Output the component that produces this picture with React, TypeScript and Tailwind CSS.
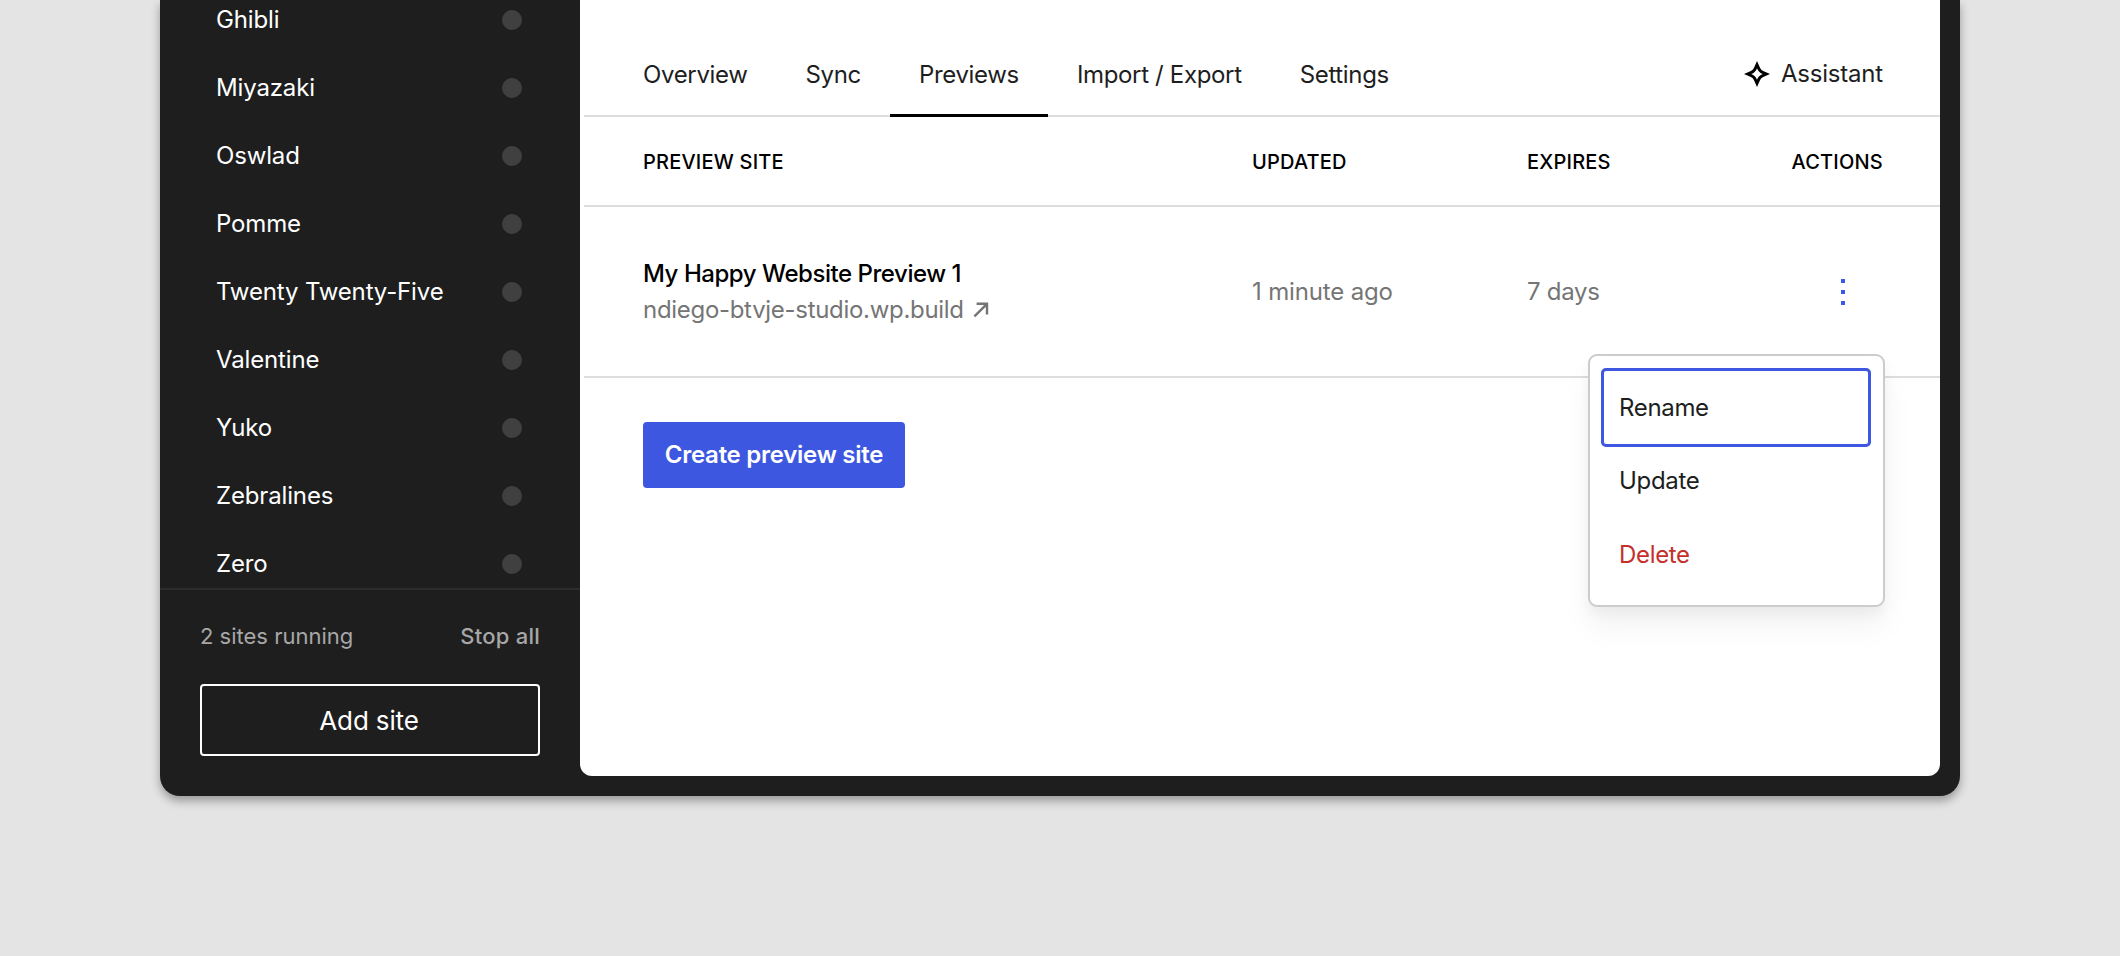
import React from 'react'

const sites = [
  'Ghibli',
  'Miyazaki',
  'Oswlad',
  'Pomme',
  'Twenty Twenty-Five',
  'Valentine',
  'Yuko',
  'Zebralines',
  'Zero'
]

const tabs = ['Overview', 'Sync', 'Previews', 'Import / Export', 'Settings']

function Sidebar() {
  return (
    <aside className="w-[420px] shrink-0 flex flex-col text-white">
      <ul className="h-[588px] -mt-[14px] mb-[14px] flex flex-col">
        {sites.map((site) => (
          <li key={site} className="h-[68px] shrink-0 pl-14 pr-[58px] flex items-center justify-between">
            <span className="text-[24px] tracking-[-0.15px]">{site}</span>
            <span className="size-5 rounded-full bg-[#404040]" />
          </li>
        ))}
      </ul>
      <div className="border-t-2 border-[#2d2d2d] px-10">
        <div className="mt-[30px] h-8 flex items-center justify-between text-[22px] text-[#a7a7a7]">
          <span>2 sites running</span>
          <button className="font-medium tracking-[0.25px]">Stop all</button>
        </div>
        <button className="mt-8 h-[72px] w-full pr-[2px] border-2 border-white rounded-[4px] text-[26px] tracking-[-0.15px] flex items-center justify-center">
          Add site
        </button>
      </div>
    </aside>
  )
}

function SparkleIcon() {
  return (
    <svg className="size-[26px]" viewBox="0 0 26 26" fill="#000" fillRule="evenodd">
      <path d="M13 0L16 6.8Q16.9 9.1 19.2 10L26 13L19.2 16Q16.9 16.9 16 19.2L13 26L10 19.2Q9.1 16.9 6.8 16L0 13L6.8 10Q9.1 9.1 10 6.8ZM13 7.2Q11.5 11.5 7.2 13Q11.5 14.5 13 18.8Q14.5 14.5 18.8 13Q14.5 11.5 13 7.2Z" />
    </svg>
  )
}

function ArrowIcon() {
  return (
    <svg className="size-4" viewBox="0 0 16 16" fill="none" stroke="currentColor" strokeWidth="2.4">
      <path d="M3.6 1.8H14V12.4M14 1.8L1.4 14.4" />
    </svg>
  )
}

function ActionsMenu() {
  return (
    <div className="absolute left-[1008px] top-[354px] w-[297px] h-[253px] pl-[11px] pr-3 py-3 bg-white border-2 border-[#cccccc] rounded-[9px] shadow-[0_20px_30px_rgba(0,0,0,0.05),0_8px_12px_rgba(0,0,0,0.04)] text-[24px] tracking-[-0.33px] text-[#1e1e1e]">
      <div className="h-[79px] px-[15px] flex items-center border-[3px] border-[#3d57e0] rounded-[5px]">Rename</div>
      <div className="h-[68px] px-[18px] flex items-center">Update</div>
      <div className="h-[79px] px-[18px] flex items-center text-[#c4302b]">Delete</div>
    </div>
  )
}

export default function App() {
  return (
    <div className="h-[956px] w-full overflow-hidden bg-[#e4e4e4] px-40 font-['Inter',sans-serif]">
      <div className="h-[796px] flex bg-[#1e1e1e] rounded-b-[20px] shadow-[0_5px_10px_rgba(0,0,0,0.33)]">
        <Sidebar />
        <main className="relative w-[1360px] h-[776px] pl-1 bg-white rounded-b-[12px]">
          <nav className="h-[117px] pl-[30px] pr-[57px] border-b-2 border-[#dddddd] flex items-end justify-between text-[24px] tracking-[-0.28px] text-[#1e1e1e]">
            <div className="flex tracking-[-0.34px]">
              {tabs.map((tab) => (
                <button
                  key={tab}
                  className={
                    tab === 'Previews'
                      ? 'h-[84px] px-[29px] pt-[2px] -mb-[2px] border-b-[3px] border-black'
                      : 'h-[84px] px-[29px] pt-[2px] -mb-[2px] border-b-[3px] border-transparent'
                  }
                >
                  {tab}
                </button>
              ))}
            </div>
            <button className="h-[82px] flex items-center gap-[11px] tracking-[-0.2px]">
              <SparkleIcon />
              Assistant
            </button>
          </nav>

          <div className="h-[90px] pt-px pl-[59px] pr-[57px] border-b-2 border-[#dddddd] flex items-center text-[20px] tracking-[0.2px] font-medium text-black">
            <span className="w-[609px]">PREVIEW SITE</span>
            <span className="w-[275px]">UPDATED</span>
            <span className="flex-1">EXPIRES</span>
            <span>ACTIONS</span>
          </div>

          <div className="h-[171px] pl-[59px] pr-[95px] border-b-2 border-[#dddddd] flex items-center text-[24px] tracking-[-0.3px] text-[#757575]">
            <div className="w-[609px]">
              <div className="h-9 leading-9 font-medium tracking-[-0.46px] text-black">My Happy Website Preview 1</div>
              <div className="h-9 leading-9 flex items-center gap-[9px]">
                <span>ndiego-btvje-studio.wp.build</span>
                <ArrowIcon />
              </div>
            </div>
            <span className="w-[275px] tracking-[-0.16px]">1 minute ago</span>
            <span className="flex-1">7 days</span>
            <button className="flex flex-col gap-[7px]">
              <span className="size-1 bg-[#3858e9]" />
              <span className="size-1 bg-[#3858e9]" />
              <span className="size-1 bg-[#3858e9]" />
            </button>
          </div>

          <button className="mt-11 ml-[59px] h-[66px] w-[262px] rounded-[4px] bg-[#3d57e0] text-[24px] tracking-[-0.26px] font-semibold text-white">
            Create preview site
          </button>

          <ActionsMenu />
        </main>
      </div>
    </div>
  )
}
